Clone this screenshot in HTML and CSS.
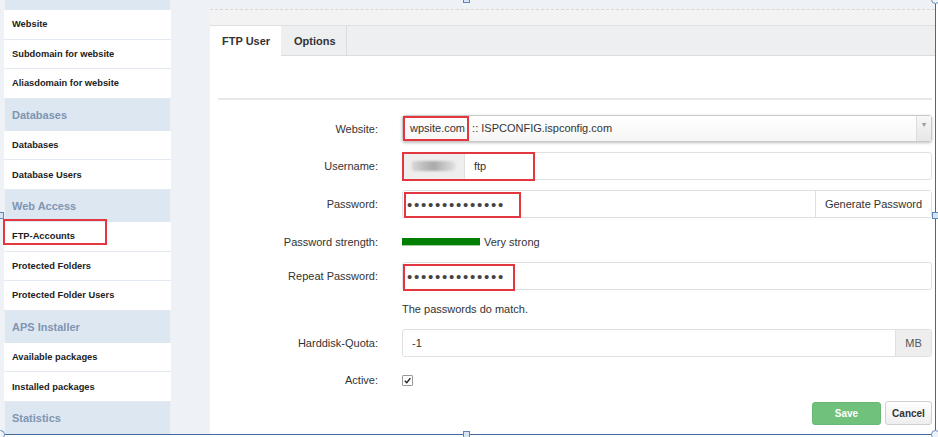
FILE: index.html
```html
<!DOCTYPE html>
<html lang="en">
<head>
  <meta charset="UTF-8">
  <title>FTP User</title>
  <link rel="stylesheet" href="styles.css">
</head>
<body>
  <div class="page">
    <aside class="side">
      <div class="side-head side-head-cut"></div>
      <div class="side-item">Website</div>
      <div class="side-item">Subdomain for website</div>
      <div class="side-item">Aliasdomain for website</div>
      <div class="side-head">Databases</div>
      <div class="side-item">Databases</div>
      <div class="side-item">Database Users</div>
      <div class="side-head">Web Access</div>
      <div class="side-item">FTP-Accounts<span class="hl hl-menu"></span></div>
      <div class="side-item">Protected Folders</div>
      <div class="side-item">Protected Folder Users</div>
      <div class="side-head">APS Installer</div>
      <div class="side-item">Available packages</div>
      <div class="side-item">Installed packages</div>
      <div class="side-head">Statistics</div>
    </aside>

    <main class="main">
      <div class="main-top"></div>
      <div class="tabs">
        <div class="tab active">FTP User</div>
        <div class="tab">Options</div>
      </div>
      <div class="panel">
        <div class="sep"></div>
        <form class="form" onsubmit="return false;">
          <div class="row">
            <label class="lbl">Website:</label>
            <div class="select">
              <span class="sel-text"><span class="mark">wpsite.com</span> :: ISPCONFIG.ispconfig.com</span>
              <span class="caret">&#9662;</span>
            </div>
          </div>
          <div class="row">
            <label class="lbl">Username:</label>
            <div class="group">
              <span class="addon addon-blur"><span class="blur"></span></span>
              <span class="input input-grow">ftp</span>
              <span class="hl hl-user"></span>
            </div>
          </div>
          <div class="row">
            <label class="lbl">Password:</label>
            <div class="group">
              <span class="input input-grow dots">••••••••••••••</span>
              <span class="addon addon-btn">Generate Password</span>
              <span class="hl hl-pass"></span>
            </div>
          </div>
          <div class="row row-strength">
            <label class="lbl">Password strength:</label>
            <div class="strength"><span class="bar"></span>Very strong</div>
          </div>
          <div class="row">
            <label class="lbl">Repeat Password:</label>
            <div class="group">
              <span class="input input-grow dots">••••••••••••••</span>
              <span class="hl hl-repeat"></span>
            </div>
          </div>
          <div class="row row-note">
            <span></span>
            <div class="note">The passwords do match.</div>
          </div>
          <div class="row">
            <label class="lbl">Harddisk-Quota:</label>
            <div class="group">
              <span class="input input-grow quota">-1</span>
              <span class="addon addon-mb">MB</span>
            </div>
          </div>
          <div class="row row-check">
            <label class="lbl">Active:</label>
            <div><span class="check"><svg viewBox="0 0 10 10"><polyline points="2,5.2 4.2,7.4 8.2,2.4" fill="none" stroke="#222" stroke-width="1.6"/></svg></span></div>
          </div>
          <div class="actions">
            <button class="btn btn-save" type="submit">Save</button>
            <button class="btn btn-cancel" type="button">Cancel</button>
          </div>
        </form>
      </div>
    </main>
  </div>

  <div class="frame-r"></div>
  <div class="frame-b"></div>
  <span class="handle h-top"></span>
  <span class="handle h-bottom"></span>
  <span class="handle h-right"></span>
  <span class="handle h-left"></span>
  <span class="knob k-br"></span>
  <span class="knob k-bl"></span>
  <span class="knob k-tr"></span>
</body>
</html>
```

FILE: styles.css
```css
html, body {
  margin: 0; padding: 0;
  height: 437px;
  overflow: hidden;
  background: #fff;
  font-family: "Liberation Sans", Arial, sans-serif;
}
body { position: relative; }
.page {
  display: flex;
  height: 435px;
  width: 936px;
  background: #eef2f6;
}
/* sidebar */
.side {
  width: 167px;
  margin-left: 4px;
  flex: none;
}
.side-head {
  height: 32px;
  margin: 0 1px;
  background: #dde7f2;
  color: #7f95b0;
  font-size: 11px;
  font-weight: bold;
  display: flex; align-items: center;
  padding-left: 7px;
  box-sizing: border-box;
}
.side-head-cut { height: 10px; }
.side-item {
  position: relative;
  height: 29.6px;
  background: #fff;
  border-bottom: 1px solid #e3e9f0;
  box-sizing: border-box;
  padding-left: 8px;
  display: flex; align-items: center;
  font-size: 9.3px;
  font-weight: bold;
  color: #222;
}
/* red marks */
.hl {
  position: absolute;
  border: 2px solid #e3363e;
  box-sizing: border-box;
  pointer-events: none;
}
.hl-menu { left: -1px; top: -3px; width: 104px; height: 26px; }
.hl-user { left: -1px; top: -1px; width: 133px; height: 29px; }
.hl-pass { left: 1px; top: 1px; width: 117px; height: 26px; }
.hl-repeat { left: 0; top: 1px; width: 112px; height: 27px; }

/* main */
.main {
  margin-left: 39px;
  width: 725px;
  flex: none;
  margin-top: 9px;
  background: #f3f3f3;
  border-top: 1px dashed #d6d6d6;
  display: flex; flex-direction: column;
}
.main-top { height: 15px; }
.tabs {
  display: flex;
  height: 31px;
  background: #eeeff1;
  border-top: 1px solid #e0e0e0;
  border-bottom: 1px solid #dcdcdc;
  box-sizing: border-box;
}
.tab {
  padding: 0 12px;
  display: flex; align-items: center;
  font-size: 11px;
  font-weight: bold;
  color: #333;
  white-space: nowrap;
  border-right: 1px solid #dcdcdc;
}
.tab.active {
  background: #fff;
  width: 71px;
  box-sizing: border-box;
  margin-bottom: -1px;
  border-right: none;
}
.tab + .tab { width: 66px; box-sizing: border-box; padding-left: 13px; }
.panel {
  flex: 1;
  background: #fff;
  padding: 42px 3px 0 8px;
}
.sep { height: 2px; background: #e8e8e8; margin-bottom: 15px; }

/* form */
.form { font-size: 11px; color: #333; }
.row {
  display: grid;
  grid-template-columns: 160px 1fr;
  column-gap: 24px;
  align-items: center;
  margin-bottom: 10px;
}
.lbl { text-align: right; color: #333; }
.select {
  height: 27px;
  border: 1px solid #c9c9c9;
  border-radius: 3px;
  background: linear-gradient(#fff, #f6f6f6);
  box-shadow: 0 1px 3px rgba(0,0,0,.25);
  display: flex; align-items: center;
  box-sizing: border-box;
  color: #333;
}
.sel-text { flex: 1; }
.mark {
  display: inline-block;
  border: 2px solid #e3363e;
  padding: 4px 2px 4px 5px;
  line-height: 13px;
}
.caret {
  width: 14px; height: 25px;
  border-left: 1px solid #ddd;
  background: linear-gradient(#f7f7f7, #e6e6e6);
  color: #999;
  font-size: 8px;
  text-align: center;
  line-height: 18px;
}
.group {
  position: relative;
  display: flex;
  height: 28px;
  border: 1px solid #e0e0e0;
  border-radius: 3px;
  box-sizing: border-box;
}
.input {
  display: flex; align-items: center;
  padding-left: 9px;
  color: #333;
}
.input-grow { flex: 1; }
.dots {
  padding-left: 4px;
  font-size: 15px;
  letter-spacing: 1.75px;
  color: #444;
}
.addon {
  display: flex; align-items: center; justify-content: center;
  color: #333;
}
.addon-blur {
  width: 61px;
  background: #eee;
  border-right: 1px solid #e0e0e0;
}
.blur {
  width: 44px; height: 10px;
  background: linear-gradient(90deg, #d8d8d8, #b9b9b9 30%, #aaa 50%, #c8c8c8 75%, #e2e2e2);
  border-radius: 2px 6px 6px 2px;
  filter: blur(1.2px);
}
.addon-btn {
  width: 115px;
  border-left: 1px solid #e0e0e0;
  background: #fff;
}
.addon-mb {
  width: 35px;
  background: #eee;
  border-left: 1px solid #e0e0e0;
  color: #555;
}
.row-strength { height: 28px; margin-bottom: 6px; }
.strength { display: flex; align-items: center; color: #333; }
.bar {
  width: 78px; height: 7px;
  background: #008000;
  border-bottom: 1px solid #9fd09f;
  margin-right: 4px;
}
.row-note { height: 18px; margin-bottom: 11px; }
.note { color: #333; }
.row-check { height: 20px; margin-top: 13px; margin-bottom: 11px; }
.check {
  display: block;
  width: 11px; height: 11px;
  border: 1px solid #999;
  border-radius: 1px;
  background: #fff;
  box-sizing: border-box;
}
.check svg { display: block; width: 9px; height: 9px; }
.actions {
  display: flex;
  justify-content: flex-end;
  gap: 4px;
  align-items: flex-start;
}
.btn {
  font-family: "Liberation Sans", Arial, sans-serif;
  font-size: 10px;
  font-weight: bold;
  border-radius: 3px;
  cursor: pointer;
  padding: 0;
}
.btn-save {
  width: 69px; height: 23px;
  margin-top: 1px;
  background: #6fc17c;
  border: 1px solid #66b872;
  color: #fff;
}
.btn-cancel {
  width: 47px; height: 24px;
  background: linear-gradient(#fff, #eee);
  border: 1px solid #cfcfcf;
  color: #333;
}

/* selection frame */
.frame-r {
  position: absolute;
  left: 935px; top: 0;
  width: 1px; height: 435px;
  background: #41699c;
}
.frame-b {
  position: absolute;
  left: 0; top: 434px;
  width: 936px; height: 1px;
  background: #41699c;
}
.handle {
  position: absolute;
  width: 5px; height: 5px;
  background: #d6e4f4;
  border: 1px solid #5e86b6;
}
.h-top { left: 463px; top: -4px; }
.h-bottom { left: 463px; top: 431px; }
.h-right { left: 932px; top: 212px; }
.h-left { left: -3px; top: 212px; }
.knob {
  position: absolute;
  width: 7px; height: 7px;
  border-radius: 50%;
  background: #eef3f9;
  border: 1px solid #6b8fbb;
}
.k-br { left: 931px; top: 430px; }
.k-bl { left: -4px; top: 430px; }
.k-tr { left: 931px; top: -5px; }
```
